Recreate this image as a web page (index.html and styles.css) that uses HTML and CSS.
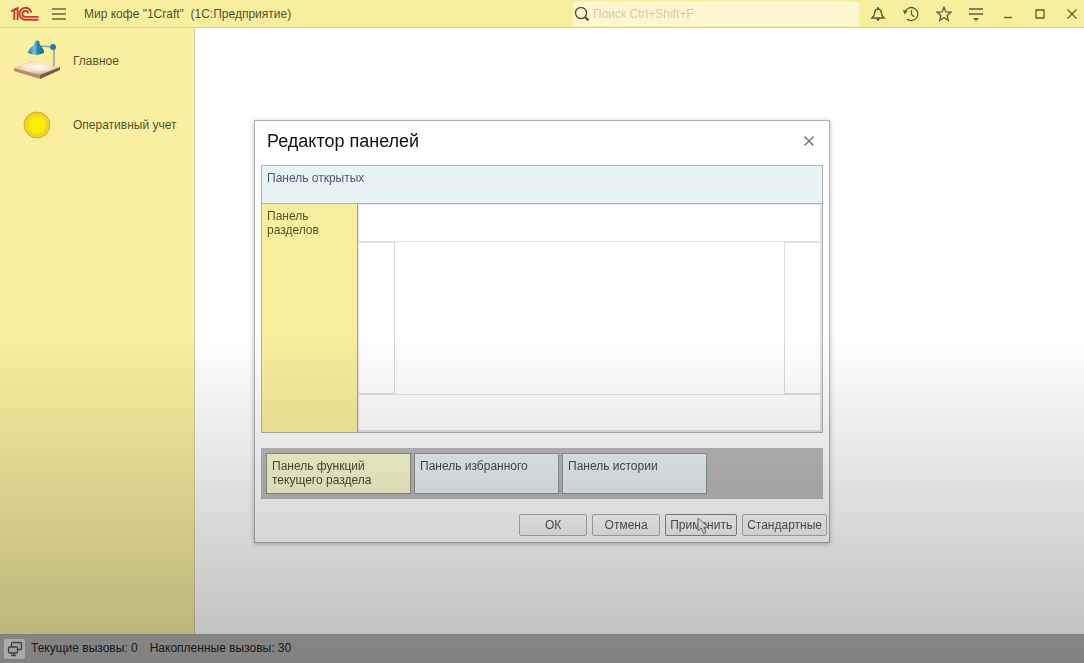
FILE: index.html
```html
<!DOCTYPE html>
<html lang="ru">
<head>
<meta charset="utf-8">
<title>Мир кофе "1Craft" (1С:Предприятие)</title>
<link rel="stylesheet" href="styles.css">
</head>
<body>
<div class="app">
  <header class="titlebar">
    <svg class="logo" width="30" height="16" viewBox="0 0 30 16" fill="none" stroke="#c93a30" stroke-width="1.900" aria-label="1С">
      <path d="M1 5.500L4.300 3.400V14M7.600 14V2.200L3.500 4.400" />
      <path d="M21.300 6.500A6 6 0 1 0 15.600 13.800H28.500" />
      <path d="M18.300 7.300A3 3 0 1 0 15.600 10.900H28.500" />
    </svg>
    <button class="icon-btn menu" aria-label="Меню">
      <svg width="14" height="14" viewBox="0 0 14 14" stroke="#6b6638" stroke-width="1.300"><path d="M0 2H14M0 7H14M0 12H14"/></svg>
    </button>
    <h1 class="app-title">Мир кофе "1Craft"&nbsp; (1С:Предприятие)</h1>
    <label class="search">
      <svg width="16" height="16" viewBox="0 0 16 16" fill="none" stroke="#57532f"><circle cx="7" cy="7" r="5.500" stroke-width="1.400"/><path d="M11 11L14.500 14.500" stroke-width="2.400"/></svg>
      <input type="search" placeholder="Поиск Ctrl+Shift+F" aria-label="Поиск">
    </label>
    <nav class="tools">
      <button class="icon-btn" aria-label="Уведомления">
        <svg width="16" height="16" viewBox="0 0 16 16" fill="none" stroke="#5f5a32" stroke-width="1.400"><path d="M2 12H14C12 10.300 11.500 9 11.200 6.500C10.900 4.300 9.800 3 8 3S5.100 4.300 4.800 6.500C4.500 9 4 10.300 2 12Z"/><path d="M8 1V3"/><path d="M5.500 12.500H10.500L8 15.300Z" fill="#5f5a32" stroke="none"/></svg>
      </button>
      <button class="icon-btn" aria-label="История">
        <svg width="16" height="16" viewBox="0 0 16 16" fill="none" stroke="#5f5a32" stroke-width="1.300"><path d="M2 6.500A6.500 6.500 0 1 1 4 12.900M8.500 4V8.500L11 10.700"/><path d="M0 4L4.700 5L1.500 8.500Z" fill="#5f5a32" stroke="none"/></svg>
      </button>
      <button class="icon-btn" aria-label="Избранное">
        <svg width="16" height="16" viewBox="0 0 16 16" fill="none" stroke="#5f5a32" stroke-width="1.300"><path d="M8 1.200L9.900 5.900L15 6.200L11.100 9.500L12.400 14.400L8 11.700L3.600 14.400L4.900 9.500L1 6.200L6.100 5.900Z"/></svg>
      </button>
      <button class="icon-btn" aria-label="Сервис">
        <svg width="16" height="16" viewBox="0 0 16 16" stroke="#5f5a32" stroke-width="1.300"><path d="M1 3H15M1 8H15"/><path d="M5 12H11L8 15Z" fill="#5f5a32" stroke="none"/></svg>
      </button>
      <button class="icon-btn" aria-label="Свернуть">
        <svg width="16" height="16" viewBox="0 0 16 16" stroke="#5f5a32" stroke-width="1.300"><path d="M4 11.500H12"/></svg>
      </button>
      <button class="icon-btn" aria-label="Развернуть">
        <svg width="16" height="16" viewBox="0 0 16 16" fill="none" stroke="#5f5a32" stroke-width="1.300"><path d="M4 4H12V12H4Z"/></svg>
      </button>
      <button class="icon-btn" aria-label="Закрыть">
        <svg width="16" height="16" viewBox="0 0 16 16" stroke="#5f5a32" stroke-width="1.200"><path d="M3.500 3.500L12.500 12.500M12.500 3.500L3.500 12.500"/></svg>
      </button>
    </nav>
  </header>

  <div class="workspace">
    <nav class="sections">
      <a class="section" href="#main">
        <svg width="48" height="44" viewBox="0 0 48 44">
          <defs>
            <radialGradient id="desk" cx=".5" cy=".4" r=".6"><stop offset="0" stop-color="#fffdf0"/><stop offset=".45" stop-color="#f6e6cd"/><stop offset="1" stop-color="#cba486"/></radialGradient>
            <linearGradient id="lamp" x1="0" x2="1"><stop offset="0" stop-color="#2379a5"/><stop offset=".4" stop-color="#7cc0da"/><stop offset=".6" stop-color="#2c83ad"/><stop offset="1" stop-color="#1d6d97"/></linearGradient>
          </defs>
          <path d="M2 29L28 35V40L2 32Z" fill="#bb8a70"/>
          <path d="M28 35L48 28V31L28 40Z" fill="#7b5a45"/>
          <path d="M2 29L19 22L48 28L28 36Z" fill="url(#desk)"/>
          <path d="M42 8V27" stroke="#b3aaa4" stroke-width="2"/>
          <path d="M28 7L41 8" stroke="#8c9ca4" stroke-width="1.500"/>
          <path d="M23 2Q25 1 27 2L28 6Q32 9 32 14Q24 18 16 14Q17 9 22 6Z" fill="url(#lamp)"/>
          <path d="M18 15Q24 17 30 15L29 17H19Z" fill="#fff47a"/>
          <circle cx="41" cy="8" r="3" fill="#247da9"/>
        </svg>
        <span>Главное</span>
      </a>
      <a class="section" href="#accounting">
        <svg width="48" height="44" viewBox="0 0 48 44">
          <circle cx="25" cy="22" r="13" fill="#f0d32a" stroke="#d3af2e"/>
          <circle cx="25" cy="22" r="9" fill="#fdec08" stroke="#f5dc10"/>
        </svg>
        <span>Оперативный учет</span>
      </a>
    </nav>
    <main class="desktop"></main>
  </div>

  <footer class="status">
    <button class="status-btn" aria-label="Вызовы сервера">
      <svg width="16" height="16" viewBox="0 0 16 16" fill="#d5d5d5" stroke="#555" stroke-width="1.300"><rect x="4.500" y="1.500" width="10" height="7" rx="1"/><rect x="1.500" y="6" width="9" height="6" rx="1"/><path d="M4 14.500H9M6.500 12V14"/></svg>
    </button>
    <span>Текущие вызовы: 0</span>
    <span>Накопленные вызовы: 30</span>
  </footer>
</div>

<div class="modal-layer">
  <section class="dialog" role="dialog" aria-labelledby="dlg-title">
    <header class="dialog-head">
      <h2 id="dlg-title">Редактор панелей</h2>
      <button class="icon-btn" aria-label="Закрыть окно">
        <svg width="16" height="16" viewBox="0 0 16 16" stroke="#777" stroke-width="1.500"><path d="M3.500 3.500L12.500 12.500M12.500 3.500L3.500 12.500"/></svg>
      </button>
    </header>
    <div class="layout">
      <div class="panel-open">Панель открытых</div>
      <div class="panel-sections">Панель разделов</div>
      <div class="slots">
        <div class="slot-top"></div>
        <div class="slot-left"></div>
        <div class="slot-center"></div>
        <div class="slot-right"></div>
        <div class="slot-bottom"></div>
      </div>
    </div>
    <div class="tray">
      <div class="tile tile-yellow">Панель функций текущего раздела</div>
      <div class="tile">Панель избранного</div>
      <div class="tile">Панель истории</div>
    </div>
    <div class="actions">
      <button class="btn">ОК</button>
      <button class="btn">Отмена</button>
      <button class="btn btn-hover">Применить
        <svg class="cursor" width="13" height="18" viewBox="0 0 13 18"><path d="M1 1V14L4.300 11L6.500 16.500L9 15.500L6.800 10.300H11.500Z" fill="#f4f4f4" stroke="#777"/></svg>
      </button>
      <button class="btn">Стандартные</button>
    </div>
  </section>
</div>
<div class="shade"></div>
</body>
</html>
```

FILE: styles.css
```css
* { box-sizing: border-box; }

body {
  margin: 0;
  font: 12px/14px "Liberation Sans", Arial, sans-serif;
  color: #55502f;
}

button, input { font: inherit; color: inherit; }
h1, h2 { margin: 0; font-weight: normal; }
svg { display: block; flex: none; }

.app {
  min-height: 100vh;
  display: flex;
  flex-direction: column;
}

.titlebar {
  display: flex;
  align-items: center;
  height: 28px;
  padding-left: 10px;
  background: #f7ef9e;
  border-bottom: 1px solid #d6d0a0;
}

.icon-btn {
  display: grid;
  place-items: center;
  padding: 0;
  border: 0;
  background: none;
}

.menu { margin-left: 12px; }

.app-title {
  flex: 1;
  margin-left: 18px;
  font-size: 12px;
  white-space: nowrap;
}

.search {
  display: flex;
  align-items: center;
  gap: 3px;
  width: 286px;
  height: 24px;
  padding-left: 1px;
  background: #fdf7cf;
}

.search input {
  flex: 1;
  min-width: 0;
  padding: 0;
  border: 0;
  outline: 0;
  background: none;
}

.search input::placeholder { color: #d5cdaa; opacity: 1; }

.tools { display: flex; padding-left: 2px; margin-right: -4px; }
.tools .icon-btn { width: 32px; height: 24px; }
.tools .icon-btn:nth-child(-n+3) { width: 33px; }

.workspace { flex: 1; display: flex; }

.sections {
  width: 195px;
  padding: 11px 12px;
  display: flex;
  flex-direction: column;
  gap: 20px;
  background: #f8f0a0;
  border-right: 1px solid #d6d0a0;
}

.section {
  display: flex;
  align-items: center;
  gap: 13px;
  color: inherit;
  text-decoration: none;
  white-space: nowrap;
}

.desktop { flex: 1; background: #fff; }

.status {
  display: flex;
  align-items: center;
  gap: 12px;
  height: 29px;
  padding: 0 4px;
  background: #afafaf;
  border-top: 1px solid #a4a4a4;
  color: #222;
}

.status span { padding-bottom: 2px; }

.status-btn {
  display: grid;
  place-items: center;
  width: 21px;
  height: 20px;
  margin-right: -6px;
  padding: 0;
  border: 0;
  border-radius: 2px;
  background: #e2e2e2;
}

.modal-layer {
  position: fixed;
  inset: 0;
  display: grid;
  place-items: center;
}

.dialog {
  width: 576px;
  background: #fff;
  border: 1px solid #aeaeae;
  box-shadow: 0 1px 5px rgba(0, 0, 0, .25);
}

.dialog-head {
  display: flex;
  align-items: center;
  justify-content: space-between;
  height: 44px;
  padding: 0 12px 4px;
}

.dialog-head h2 { font-size: 18px; line-height: 24px; color: #111; }

.layout {
  display: grid;
  grid-template: 39px 228px / 96px 1fr;
  margin: 0 6px;
  border: 1px solid #aab2b8;
  border-top: 0;
}

.panel-open {
  grid-column: 1 / 3;
  padding: 5px;
  background: #e8f3f5;
  border: 1px solid #a9b7bf;
  border-width: 1px 0;
  color: #4f586c;
}

.panel-sections {
  padding: 5px 30px 5px 5px;
  background: #f7ef9e;
  border-right: 1px solid #a9a58a;
}

.slots {
  display: grid;
  grid-template: 37px 1fr 36px / 36px 1fr 36px;
  border: 1px solid #e2e2e2;
  border-right-width: 2px;
  border-bottom-width: 2px;
}

.slot-top, .slot-bottom { grid-column: 1 / 4; }
.slot-top { border-bottom: 1px solid #e6e6e6; }
.slot-bottom { border-top: 1px solid #e2e2e2; }
.slot-left, .slot-right { border: 1px solid #dcdcdc; }
.slot-left { border-left: 0; }
.slot-right { border-right: 0; }

.tray {
  display: flex;
  gap: 3px;
  margin: 15px 6px 0;
  padding: 5px;
  background: #bababa;
}

.tile {
  width: 145px;
  height: 41px;
  padding: 5px;
  background: #e8f2f5;
  border: 1px solid #8f9799;
  color: #454b4d;
}

.tile-yellow { background: #fafad0; border-color: #92917e; color: #4c4b35; }

.actions {
  display: flex;
  justify-content: flex-end;
  gap: 5px;
  padding: 15px 2px 6px;
}

.btn {
  position: relative;
  min-width: 68px;
  height: 22px;
  padding: 0 4px;
  border: 1px solid #b2b2b2;
  border-radius: 2px;
  background: linear-gradient(#fff, #f5f5f5);
  color: #555;
  white-space: nowrap;
}

.btn-hover { border-color: #8c8c8c; }

.cursor {
  position: absolute;
  left: 31px;
  top: 2px;
}

/* Dimming towards the bottom of the window, above everything else */
.shade {
  position: fixed;
  inset: 50% 0 0;
  background: linear-gradient(rgba(0, 0, 0, 0), rgba(0, 0, 0, .26));
  pointer-events: none;
}
```
